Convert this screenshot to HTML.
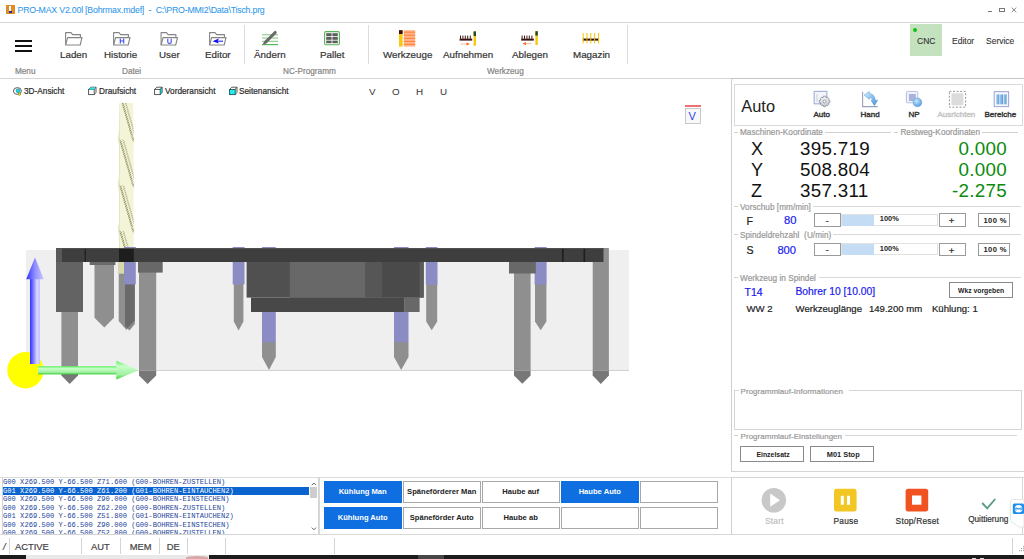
<!DOCTYPE html>
<html><head><meta charset="utf-8">
<style>
*{box-sizing:border-box;margin:0;padding:0}
html,body{width:1024px;height:559px;overflow:hidden;background:#fff}
body{position:relative;font-family:"Liberation Sans",sans-serif;color:#333}
.a{position:absolute}
.t{position:absolute;white-space:nowrap;line-height:1;-webkit-text-stroke-width:0.2px}
.hl{position:absolute;height:1px;background:#d9d9d9}
.vl{position:absolute;width:1px;background:#dcdcdc}
.rb{font-size:9.8px;color:#333}
.gl{font-size:8.2px;color:#858585}
.vt{font-size:8.25px;color:#2a2a2a;-webkit-text-stroke-width:0.2px}
.gt{font-size:8.2px;letter-spacing:0.05px;color:#989898}
.btn{position:absolute;border:1px solid #8c8c8c;background:#fff}
.cb{position:absolute;width:78px;height:21.4px;border:1px solid #a8a8a8;background:#fff;font-size:7.6px;font-weight:bold;-webkit-text-stroke-width:0;color:#222;text-align:center;line-height:19px;white-space:nowrap;overflow:hidden}
.cb.on{background:#0f6fe0;border-color:#0f6fe0;color:#fff}
.code{position:absolute;left:1px;font-family:"Liberation Mono",monospace;font-size:7.13px;color:#22449a;-webkit-text-stroke-width:0;white-space:pre;line-height:8.5px;height:8.5px}
</style></head><body>

<!-- TITLE BAR -->
<div class="a" style="left:6px;top:5px;width:9px;height:9px;background:#e08a28"></div>
<div class="a" style="left:9px;top:6px;width:2px;height:5px;background:#fff"></div>
<div class="a" style="left:9px;top:11px;width:3px;height:2px;background:#2030a0"></div>
<div class="t" style="left:17.5px;top:5.7px;font-size:8.8px;letter-spacing:-0.22px;-webkit-text-stroke-width:0.05px;color:#2c96ea">PRO-MAX V2.00l [Bohrmax.mdef]&nbsp; -&nbsp; C:\PRO-MMI2\Data\Tisch.prg</div>
<div class="a" style="left:988px;top:11px;width:4px;height:1px;background:#777"></div>
<div class="a" style="left:999px;top:8px;width:6px;height:4px;border:1px solid #777;border-top-width:1.5px"></div>
<svg class="a" style="left:1010px;top:6px" width="8" height="8"><path d="M1.7,1.6 L6.3,6.2 M6.3,1.6 L1.7,6.2" stroke="#777" stroke-width="0.9"/></svg>

<div class="hl" style="left:0;top:22px;width:1024px;background:#d4d4d4"></div>

<!-- RIBBON -->
<div class="a" style="left:15px;top:40px;width:17px;height:1.6px;background:#111"></div>
<div class="a" style="left:15px;top:45px;width:17px;height:1.6px;background:#111"></div>
<div class="a" style="left:15px;top:50px;width:17px;height:1.6px;background:#111"></div>
<div class="t gl" style="left:15px;top:68px">Menu</div>

<svg class="a" style="left:0;top:0" width="1024" height="100" viewBox="0 0 1024 100">
<g fill="none" stroke="#858585" stroke-width="1.1" stroke-linejoin="round">
<path d="M65.6,45 V32.6 H71 L72.6,34.6 H80.4 V37.4"/><path d="M65.6,45 L67.6,37.6 H82 L80.2,45 Z" fill="#fff"/>
<path d="M113.6,45 V32.6 H119 L120.6,34.6 H128.4 V37.4"/><path d="M113.6,45 L115.6,37.6 H130 L128.2,45 Z" fill="#fff"/>
<path d="M161.1,45 V32.6 H166.5 L168.1,34.6 H175.9 V37.4"/><path d="M161.1,45 L163.1,37.6 H177.5 L175.7,45 Z" fill="#fff"/>
<path d="M209.6,45 V32.6 H215 L216.6,34.6 H224.4 V37.4"/><path d="M209.6,45 L211.6,37.6 H226 L224.2,45 Z" fill="#fff"/>
</g>
<path d="M120.3,38.6 V43.4 M123.7,38.6 V43.4 M120.3,41 H123.7" stroke="#3a4ef0" stroke-width="1.1" fill="none"/>
<path d="M167.8,38.8 V42 Q167.8,43.4 169.5,43.4 Q171.2,43.4 171.2,42 V38.8" stroke="#3a4ef0" stroke-width="1.1" fill="none"/>
<path d="M212.5,41.2 L218.8,38.6 L217.6,41.2 L218.8,43.6 Z" fill="#1010f0"/><path d="M217,41.2 H223" stroke="#1010f0" stroke-width="1"/>
<g stroke="#7cc47c" stroke-width="1"><path d="M262,34.8 H278 M262,38 H278 M262,41.3 H278"/></g>
<path d="M262,44.6 H278" stroke="#4fb04f" stroke-width="1.1"/>
<path d="M262.5,44.8 L264.3,41.2 L274.1,31.4 Q275.2,30.3 276.3,31.4 Q277.4,32.5 276.3,33.6 L266.5,43.4 Z" fill="#6a6a6a"/>
<rect x="324.6" y="31.6" width="14.8" height="13.2" rx="1.2" fill="#fff" stroke="#55b455" stroke-width="1.1"/>
<g fill="#5c5c5c"><rect x="326.2" y="33.2" width="5.4" height="2.8"/><rect x="332.4" y="33.2" width="5.4" height="2.8"/><rect x="326.2" y="36.8" width="5.4" height="3"/><rect x="332.4" y="36.8" width="5.4" height="3"/><rect x="326.2" y="40.6" width="5.4" height="2.6"/><rect x="332.4" y="40.6" width="5.4" height="2.6"/></g>
<rect x="399" y="30.2" width="3.6" height="16.4" fill="#f8c810"/><rect x="399" y="30.2" width="3.6" height="3.8" fill="#3a1010"/>
<rect x="403.8" y="30.2" width="11.4" height="16.4" fill="#ffb48a"/>
<g stroke="#ff7a30" stroke-width="0.9"><path d="M403.8,32.2 H415.2 M403.8,35.2 H415.2 M403.8,38.4 H415.2 M403.8,41.4 H415.2 M403.8,44.4 H415.2"/></g>
<g fill="#3a1414"><rect x="459.6" y="38.6" width="12.6" height="2"/><rect x="460" y="35.6" width="1" height="3.2"/><rect x="462.4" y="35.6" width="1" height="3.2"/><rect x="464.8" y="35.6" width="1" height="3.2"/><rect x="467.2" y="35.6" width="1" height="3.2"/><rect x="469.8" y="35.6" width="1" height="3.2"/></g>
<path d="M460.6,44 H467" stroke="#ffb090" stroke-width="0.9"/><path d="M466.5,42.4 L470,44 L466.5,45.6 Z" fill="#ff7020"/>
<rect x="473.6" y="31.4" width="2.4" height="14.4" fill="#f8c810"/><rect x="473.6" y="31.4" width="2.4" height="4.6" fill="#204a20"/>
<g fill="#3a1414"><rect x="521.2" y="38.6" width="12.6" height="2"/><rect x="521.6" y="35.6" width="1" height="3.2"/><rect x="524" y="35.6" width="1" height="3.2"/><rect x="526.4" y="35.6" width="1" height="3.2"/><rect x="528.8" y="35.6" width="1" height="3.2"/><rect x="531.4" y="35.6" width="1" height="3.2"/></g>
<path d="M525,43.6 H531.6" stroke="#ffb090" stroke-width="0.9"/><path d="M526,42 L522.5,43.6 L526,45.2 Z" fill="#ff7020"/>
<rect x="535.4" y="31.2" width="2.4" height="13.8" fill="#f8c810"/><rect x="535.4" y="31.2" width="2.4" height="4.4" fill="#204a20"/>
<g fill="#f8c810"><rect x="582.6" y="33" width="1.1" height="10.4"/><rect x="586.4" y="33" width="1.1" height="10.4"/><rect x="590.2" y="33" width="1.1" height="10.4"/><rect x="594.1" y="33" width="1.1" height="10.4"/><rect x="598" y="33" width="1.1" height="10.4"/></g>
<rect x="583" y="38.6" width="15.6" height="2" fill="#2a0a0a"/>
<g fill="#f8c810"><rect x="582.6" y="38.4" width="1.1" height="2.4"/><rect x="586.4" y="38.4" width="1.1" height="2.4"/><rect x="590.2" y="38.4" width="1.1" height="2.4"/><rect x="594.1" y="38.4" width="1.1" height="2.4"/><rect x="598" y="38.4" width="1.1" height="2.4"/></g>
<ellipse cx="17.4" cy="91" rx="4" ry="3.4" fill="none" stroke="#606060" stroke-width="1"/>
<circle cx="18" cy="90.8" r="1.9" fill="#10d8e8" stroke="#008080" stroke-width="0.6"/>
<circle cx="19.4" cy="94" r="1.3" fill="#e0e020" stroke="#707000" stroke-width="0.5"/>
<g stroke="#4a4a4a" stroke-width="0.9" fill="none">
<rect x="88.6" y="89.4" width="5.6" height="5.2" fill="#fff"/><path d="M88.6,89.4 L90.8,87.2 H96 V92.4 L94.2,94.6 M94.2,89.4 L96,87.2"/>
</g>
<path d="M88.8,89.4 L90.8,87.4 H95.6 L93.8,89.4 Z" fill="#20f0f0"/>
<g stroke="#4a4a4a" stroke-width="0.9" fill="none">
<rect x="154.6" y="89.4" width="5.6" height="5.2" fill="#fff"/><path d="M154.6,89.4 L156.8,87.2 H162 V92.4 L160.2,94.6 M160.2,89.4 L162,87.2"/>
</g>
<path d="M160.4,89.4 L162,87.4 V92.4 L160.4,94.4 Z" fill="#20e8e8" stroke="#106060" stroke-width="0.5"/>
<g stroke="#4a4a4a" stroke-width="0.9" fill="none">
<path d="M229.6,89.4 L231.8,87.2 H237 V92.4 L235.2,94.6 M235.2,89.4 L237,87.2"/>
</g>
<rect x="229.6" y="89.4" width="5.6" height="5.2" fill="#20f0f0" stroke="#1a5050" stroke-width="0.9"/>
</svg>


<div class="t rb" style="left:60px;top:49.7px">Laden</div>
<div class="t rb" style="left:104px;top:49.7px">Historie</div>
<div class="t rb" style="left:159px;top:49.7px">User</div>
<div class="t rb" style="left:205px;top:49.7px">Editor</div>
<div class="t gl" style="left:122px;top:68px">Datei</div>
<div class="vl" style="left:244px;top:25px;height:39px"></div>
<div class="t rb" style="left:254px;top:49.7px">&Auml;ndern</div>
<div class="t rb" style="left:320px;top:49.7px">Pallet</div>
<div class="t gl" style="left:283px;top:68px">NC-Programm</div>
<div class="vl" style="left:368px;top:25px;height:39px"></div>
<div class="t rb" style="left:383px;top:49.7px">Werkzeuge</div>
<div class="t rb" style="left:443px;top:49.7px">Aufnehmen</div>
<div class="t rb" style="left:512px;top:49.7px">Ablegen</div>
<div class="t rb" style="left:573px;top:49.7px">Magazin</div>
<div class="t gl" style="left:487px;top:68px">Werkzeug</div>
<div class="vl" style="left:627px;top:25px;height:39px"></div>

<div class="a" style="left:910px;top:24px;width:32px;height:32px;background:#c4e2be"></div>
<div class="a" style="left:913px;top:28px;width:4px;height:4px;border-radius:50%;background:#10c010"></div>
<div class="t" style="left:917px;top:36.5px;font-size:8.5px;-webkit-text-stroke-width:0.1px;color:#333">CNC</div>
<div class="t" style="left:952px;top:36.5px;font-size:8.5px;-webkit-text-stroke-width:0.1px;color:#333">Editor</div>
<div class="t" style="left:986px;top:36.5px;font-size:8.5px;-webkit-text-stroke-width:0.1px;color:#333">Service</div>

<div class="hl" style="left:0;top:78px;width:1024px;background:#d4d4d4"></div>

<!-- VIEW TOOLBAR -->
<div id="view-toolbar"></div>
<div class="t vt" style="left:24px;top:88.3px">3D-Ansicht</div>
<div class="t vt" style="left:99px;top:88.3px">Draufsicht</div>
<div class="t vt" style="left:165px;top:88.3px">Vorderansicht</div>
<div class="t vt" style="left:239px;top:88.3px">Seitenansicht</div>
<div class="t" style="left:369px;top:87.2px;font-size:9.8px;-webkit-text-stroke-width:0.05px;color:#3a3a3a">V</div>
<div class="t" style="left:392px;top:87.2px;font-size:9.8px;-webkit-text-stroke-width:0.05px;color:#3a3a3a">O</div>
<div class="t" style="left:416px;top:87.2px;font-size:9.8px;-webkit-text-stroke-width:0.05px;color:#3a3a3a">H</div>
<div class="t" style="left:440px;top:87.2px;font-size:9.8px;-webkit-text-stroke-width:0.05px;color:#3a3a3a">U</div>

<!-- SCENE -->
<svg class="a" style="left:0;top:100px" width="731" height="300" viewBox="0 100 731 300">
<defs>
<pattern id="drl" width="2.2" height="2.2" patternUnits="userSpaceOnUse" patternTransform="rotate(-30)">
<rect width="2.2" height="2.2" fill="#e8e8c0"/><rect width="0.9" height="2.2" fill="#9a9a68"/>
</pattern>
<pattern id="drl2" width="2.5" height="2.5" patternUnits="userSpaceOnUse" patternTransform="rotate(-30)">
<rect width="2.5" height="2.5" fill="#eeeecc"/><rect width="0.6" height="2.5" fill="#b0b080"/>
</pattern>
<linearGradient id="bluesh" x1="0" x2="1" y1="0" y2="0"><stop offset="0" stop-color="#3030ff"/><stop offset="0.35" stop-color="#8080ff"/><stop offset="0.7" stop-color="#d8d8ff"/><stop offset="1" stop-color="#c0c0ff"/></linearGradient>
<linearGradient id="bluehd" x1="0" x2="1" y1="0" y2="0"><stop offset="0" stop-color="#3030ff"/><stop offset="0.5" stop-color="#9090ff"/><stop offset="1" stop-color="#c8c8ff"/></linearGradient>
<linearGradient id="greensh" x1="0" x2="0" y1="0" y2="1"><stop offset="0" stop-color="#60f060"/><stop offset="0.3" stop-color="#c8ffc8"/><stop offset="0.75" stop-color="#a0f0a0"/><stop offset="1" stop-color="#30d030"/></linearGradient>
</defs>
<!-- drill above -->
<clipPath id="drc"><path d="M119.6,103 H133 L133.6,130 L134.4,138 L133.6,146 L133.6,176 L134.4,184 L133.6,192 V222 L134.4,229 L133.6,236 L133.6,248 H119 V236 L118.3,229 L119,222 V192 L118.3,184 L119,176 V146 L118.3,138 L119,130 Z"/></clipPath>
<g clip-path="url(#drc)">
<rect x="117" y="103" width="19" height="160" fill="#f4f4d8"/>
<path d="M121.5,102.7 l2.6,1.8 M122.1,104.7 l2.6,1.8 M122.6,106.8 l2.6,1.8 M123.2,108.9 l2.6,1.8 M123.8,110.9 l2.6,1.8 M124.4,113.0 l2.6,1.8 M125.0,115.1 l2.6,1.8 M125.6,117.2 l2.6,1.8 M126.2,119.2 l2.6,1.8 M126.8,121.3 l2.6,1.8 M127.4,123.4 l2.6,1.8 M128.0,125.4 l2.6,1.8 M128.6,127.5 l2.6,1.8 M129.1,129.6 l2.6,1.8 M129.7,131.6 l2.6,1.8 M130.3,133.7 l2.6,1.8 M131.5,137.8 l2.6,1.8 M119.1,139.9 l2.6,1.8 M119.7,142.0 l2.6,1.8 M120.3,144.0 l2.6,1.8 M120.9,146.1 l2.6,1.8 M121.5,148.2 l2.6,1.8 M122.1,150.2 l2.6,1.8 M122.6,152.3 l2.6,1.8 M123.2,154.4 l2.6,1.8 M123.8,156.4 l2.6,1.8 M124.4,158.5 l2.6,1.8 M125.0,160.6 l2.6,1.8 M125.6,162.7 l2.6,1.8 M126.2,164.7 l2.6,1.8 M126.8,166.8 l2.6,1.8 M127.4,168.9 l2.6,1.8 M128.0,170.9 l2.6,1.8 M128.6,173.0 l2.6,1.8 M129.1,175.1 l2.6,1.8 M129.7,177.1 l2.6,1.8 M130.3,179.2 l2.6,1.8 M131.5,183.3 l2.6,1.8 M119.1,185.4 l2.6,1.8 M119.7,187.5 l2.6,1.8 M120.3,189.5 l2.6,1.8 M120.9,191.6 l2.6,1.8 M121.5,193.7 l2.6,1.8 M122.1,195.7 l2.6,1.8 M122.6,197.8 l2.6,1.8 M123.2,199.9 l2.6,1.8 M123.8,201.9 l2.6,1.8 M124.4,204.0 l2.6,1.8 M125.0,206.1 l2.6,1.8 M125.6,208.2 l2.6,1.8 M126.2,210.2 l2.6,1.8 M126.8,212.3 l2.6,1.8 M127.4,214.4 l2.6,1.8 M128.0,216.4 l2.6,1.8 M128.6,218.5 l2.6,1.8 M129.1,220.6 l2.6,1.8 M129.7,222.6 l2.6,1.8 M130.3,224.7 l2.6,1.8 M131.5,228.8 l2.6,1.8 M119.1,230.9 l2.6,1.8 M119.7,233.0 l2.6,1.8 M120.3,235.0 l2.6,1.8 M120.9,237.1 l2.6,1.8 M121.5,239.2 l2.6,1.8 M122.1,241.2 l2.6,1.8 M122.6,243.3 l2.6,1.8 M123.2,245.4 l2.6,1.8" stroke="#85855a" stroke-width="0.9" fill="none"/>
<path d="M124.8,102.8 l2.2,1.5 M125.4,104.8 l2.2,1.5 M125.9,106.9 l2.2,1.5 M126.5,109.0 l2.2,1.5 M127.1,111.0 l2.2,1.5 M127.7,113.1 l2.2,1.5 M128.3,115.2 l2.2,1.5 M128.9,117.2 l2.2,1.5 M129.5,119.3 l2.2,1.5 M130.1,121.4 l2.2,1.5 M130.7,123.5 l2.2,1.5 M131.3,125.5 l2.2,1.5 M131.9,127.6 l2.2,1.5 M132.4,129.7 l2.2,1.5 M133.0,131.7 l2.2,1.5 M130.9,135.8 l2.6,1.8 M132.1,139.9 l2.6,1.8 M122.4,140.0 l2.2,1.5 M123.0,142.1 l2.2,1.5 M123.6,144.1 l2.2,1.5 M124.2,146.2 l2.2,1.5 M124.8,148.3 l2.2,1.5 M125.4,150.3 l2.2,1.5 M125.9,152.4 l2.2,1.5 M126.5,154.5 l2.2,1.5 M127.1,156.5 l2.2,1.5 M127.7,158.6 l2.2,1.5 M128.3,160.7 l2.2,1.5 M128.9,162.8 l2.2,1.5 M129.5,164.8 l2.2,1.5 M130.1,166.9 l2.2,1.5 M130.7,169.0 l2.2,1.5 M131.3,171.0 l2.2,1.5 M131.9,173.1 l2.2,1.5 M132.4,175.2 l2.2,1.5 M133.0,177.2 l2.2,1.5 M130.9,181.3 l2.6,1.8 M132.1,185.4 l2.6,1.8 M122.4,185.5 l2.2,1.5 M123.0,187.6 l2.2,1.5 M123.6,189.6 l2.2,1.5 M124.2,191.7 l2.2,1.5 M124.8,193.8 l2.2,1.5 M125.4,195.8 l2.2,1.5 M125.9,197.9 l2.2,1.5 M126.5,200.0 l2.2,1.5 M127.1,202.0 l2.2,1.5 M127.7,204.1 l2.2,1.5 M128.3,206.2 l2.2,1.5 M128.9,208.2 l2.2,1.5 M129.5,210.3 l2.2,1.5 M130.1,212.4 l2.2,1.5 M130.7,214.5 l2.2,1.5 M131.3,216.5 l2.2,1.5 M131.9,218.6 l2.2,1.5 M132.4,220.7 l2.2,1.5 M133.0,222.7 l2.2,1.5 M130.9,226.8 l2.6,1.8 M132.1,230.9 l2.6,1.8 M122.4,231.0 l2.2,1.5 M123.0,233.1 l2.2,1.5 M123.6,235.1 l2.2,1.5 M124.2,237.2 l2.2,1.5 M124.8,239.3 l2.2,1.5 M125.4,241.3 l2.2,1.5 M125.9,243.4 l2.2,1.5 M126.5,245.5 l2.2,1.5" stroke="#a0a070" stroke-width="0.75" fill="none"/>
<rect x="118" y="103" width="1.6" height="160" fill="#dcdcb0"/>
</g>
<!-- background plane -->
<rect x="26" y="250" width="603" height="120.5" fill="#efefef"/>
<rect x="26" y="370" width="603" height="1" fill="#d2d2d2"/>
<!-- rods below plane (true color tips) -->
<g fill="#777">
<path d="M61.4,370.5 H78 V375.6 L69.7,384 L61.4,375.6 Z"/>
<path d="M139,370.5 H156.2 V375.6 L147.6,384 L139,375.6 Z"/>
<path d="M514,370.5 H530.6 V375.6 L522.3,383.8 L514,375.6 Z"/>
<path d="M592.7,370.5 H608.9 V375.6 L600.8,384 L592.7,375.6 Z"/>
</g>
<g fill="#8f8f8f">
<!-- rod1 -->
<rect x="61.4" y="312" width="16.6" height="58.5"/>
<!-- rod2 -->
<path d="M94.5,262 H114 V317.7 L104.3,327.5 L94.5,317.7 Z"/>
<!-- rod3 grey -->
<path d="M118.7,262 H134.8 V321 L126.5,330 L118.7,321 Z"/>
<!-- rod4 -->
<rect x="139" y="272" width="17.2" height="98.5"/>
<!-- rod A -->
<path d="M233.8,284 H243.4 V321.4 L238.6,330.4 L233.8,321.4 Z"/>
<!-- rod C -->
<path d="M262,342 H275.8 V357 L269,370 L262,357 Z"/>
<path d="M394,342 H408.5 V357 L401.2,370 L394,357 Z"/>
<!-- rod D -->
<path d="M426.2,284 H437.2 V321.4 L431.7,330.2 L426.2,321.4 Z"/>
<!-- rod E -->
<rect x="514" y="273" width="16.6" height="97.5"/>
<!-- rod F -->
<path d="M535,284 H546.4 V321.4 L540.7,330.2 L535,321.4 Z"/>
<!-- rod G -->
<rect x="592.7" y="248" width="16.2" height="122.5"/>
</g>
<path d="M125,262 H134.8 V321 L127.5,328.5 L125,326 Z" fill="#6a6a6a"/>
<path d="M127.5,328.5 L134.8,321 V324 L129.5,330.5 Z" fill="#8a8a8a"/>
<rect x="118.7" y="262" width="6.4" height="11.7" fill="#d8d8a8"/>
<!-- blue rods -->
<g fill="#8c8cc4">
<rect x="124" y="247" width="11.8" height="37.4"/>
<rect x="232.7" y="247" width="11.8" height="37.4"/>
<rect x="425.8" y="247" width="11.7" height="37.7"/>
<rect x="534.6" y="247" width="12" height="37.5"/>
<rect x="262" y="312" width="13.8" height="30.2"/>
<rect x="394" y="312" width="14.5" height="30.2"/>
<rect x="262" y="247" width="13.8" height="2"/>
<rect x="394" y="247" width="14.5" height="2"/>
</g>
<!-- top bar -->
<rect x="56" y="248" width="547.5" height="14" fill="#3e3e3e"/>
<rect x="56" y="248" width="6" height="14" fill="#585858"/>
<rect x="84.6" y="248" width="1.4" height="14" fill="#222"/>
<rect x="119" y="248" width="14.8" height="14" fill="#1e1e1e"/>
<rect x="562" y="248" width="1.6" height="14" fill="#1e1e1e"/>
<rect x="583.5" y="248" width="1.6" height="14" fill="#1e1e1e"/>
<rect x="56" y="248" width="547.5" height="0.8" fill="#555"/>
<!-- blocks -->
<rect x="56" y="262" width="27" height="50" fill="#636363"/>
<rect x="89.7" y="262" width="25.7" height="3" fill="#6a6a6a"/>
<rect x="138" y="262" width="24.7" height="10.6" fill="#686868"/>
<rect x="509" y="262" width="26.8" height="11.5" fill="#686868"/>
<rect x="246.6" y="262" width="177.1" height="35.6" fill="#505050"/>
<rect x="289.8" y="262" width="75.2" height="35.6" fill="#686868"/>
<rect x="365" y="262" width="17" height="35.6" fill="#565656"/>
<rect x="382" y="262" width="37.6" height="35.6" fill="#4a4a4a"/>
<rect x="419.6" y="262" width="4.1" height="35.6" fill="#5c5c5c"/>
<rect x="251" y="297.6" width="153.7" height="14.4" fill="#484848"/>
<rect x="404.7" y="297.6" width="14.9" height="14.4" fill="#686868"/>
<!-- axes -->
<circle cx="25.5" cy="370.2" r="18.2" fill="#ffff00"/>
<rect x="30" y="278" width="10" height="86" fill="url(#bluesh)"/>
<path d="M26.2,279.2 L35,257.5 L43.8,279.2 Z" fill="url(#bluehd)"/>
<rect x="38" y="366.2" width="79" height="8.2" fill="url(#greensh)"/>
<path d="M116.3,360.8 L138.7,370.2 L116.3,379.4 Z" fill="url(#greensh)"/>
</svg>


<!-- V box -->
<div class="a" style="left:685px;top:105px;width:16px;height:2px;background:#f07070"></div>
<div class="a" style="left:685px;top:108px;width:16px;height:16px;border:1px solid #c8c8c8;background:#f8f8f8"></div>
<div class="t" style="left:688.6px;top:110.6px;font-size:11px;-webkit-text-stroke-width:0;color:#2a3cf0">V</div>

<!-- RIGHT PANEL -->
<div class="a" style="left:731px;top:78px;width:293px;height:1.2px;background:#c4c4c4"></div>
<div class="a" style="left:731px;top:78px;width:1px;height:394px;background:#cfcfcf"></div>
<div class="a" style="left:733.5px;top:84px;width:289px;height:41.5px;border:1px solid #dadada"></div>
<div class="t" style="left:741.3px;top:97.5px;font-size:16.4px;-webkit-text-stroke-width:0;color:#222">Auto</div>
<svg class="a" style="left:800px;top:84px" width="224" height="30" viewBox="800 84 224 30">
<defs>
<linearGradient id="gearg" x1="0" y1="0" x2="0" y2="1"><stop offset="0" stop-color="#f4f6f8"/><stop offset="1" stop-color="#c4c8d0"/></linearGradient>
<radialGradient id="npb" cx="0.4" cy="0.35" r="0.7"><stop offset="0" stop-color="#c8e8ff"/><stop offset="1" stop-color="#4c98dc"/></radialGradient>
<linearGradient id="hand" x1="0" y1="0" x2="1" y2="1"><stop offset="0" stop-color="#d8f2ff"/><stop offset="1" stop-color="#3c90d8"/></linearGradient>
<linearGradient id="ber" x1="0" y1="0" x2="1" y2="0"><stop offset="0" stop-color="#a8d0f0"/><stop offset="1" stop-color="#5c98d8"/></linearGradient>
</defs>
<rect x="814.2" y="91.4" width="12.6" height="12.4" fill="#f4f6fc" stroke="#a8b4d8" stroke-width="1.2"/>
<path d="M817,94.5 V102" stroke="#8890a0" stroke-width="0.8" stroke-dasharray="1,1"/>
<g transform="translate(824.6,101.4)">
<path d="M-1.2,-5.2 H1.2 L1.6,-3.6 L3,-4.2 L4.2,-3 L3.6,-1.6 L5.2,-1.2 V1.2 L3.6,1.6 L4.2,3 L3,4.2 L1.6,3.6 L1.2,5.2 H-1.2 L-1.6,3.6 L-3,4.2 L-4.2,3 L-3.6,1.6 L-5.2,1.2 V-1.2 L-3.6,-1.6 L-4.2,-3 L-3,-4.2 L-1.6,-3.6 Z" fill="url(#gearg)" stroke="#7a8090" stroke-width="0.7"/>
<circle r="1.5" fill="#eef0f4" stroke="#7a8088" stroke-width="0.6"/>
</g>
<path d="M862.6,91.8 V106.6 H877.6" fill="none" stroke="#9aa0b8" stroke-width="1.1"/>
<path d="M864,95 L869.4,91.6 V93.6 Q874.4,94 875.4,100.2 H877.6 L874.4,105.8 L871,100.2 H872.6 Q872.2,97.4 869.4,97.4 V99.4 Z" fill="url(#hand)" stroke="#5a9ad0" stroke-width="0.5"/>
<rect x="906.4" y="91.4" width="11.4" height="11.4" rx="1" fill="#eef0fa" stroke="#b8c0e0" stroke-width="1"/>
<rect x="909" y="94" width="6.8" height="7" fill="#a8b2dc"/>
<circle cx="917.4" cy="102.4" r="4.4" fill="url(#npb)" stroke="#5a98d0" stroke-width="0.4"/>
<rect x="949.4" y="91.4" width="16.2" height="15.8" fill="none" stroke="#8a8a8a" stroke-width="0.9" stroke-dasharray="2,1.6"/>
<rect x="951.4" y="93.2" width="12" height="12" rx="1" fill="#dcdcdc"/>
<rect x="994.2" y="91.6" width="14.4" height="15" fill="#f4f6fc" stroke="#a4acd4" stroke-width="1.1"/>
<rect x="995.8" y="94" width="11.2" height="10.8" fill="#fff"/>
<rect x="996.2" y="94.4" width="3.2" height="10" fill="url(#ber)"/>
<rect x="999.8" y="94.4" width="3.2" height="10" fill="url(#ber)"/>
<rect x="1003.4" y="94.4" width="3.2" height="10" fill="url(#ber)"/>
</svg>
<div class="t" style="left:813.5px;top:110.9px;font-size:8px;-webkit-text-stroke-width:0.4px;color:#333">Auto</div>
<div class="t" style="left:860.5px;top:110.9px;font-size:8px;-webkit-text-stroke-width:0.4px;color:#333">Hand</div>
<div class="t" style="left:908.5px;top:110.9px;font-size:8px;-webkit-text-stroke-width:0.4px;color:#333">NP</div>
<div class="t" style="left:937.5px;top:110.9px;font-size:8px;-webkit-text-stroke-width:0.4px;color:#c4c4c4">Ausrichten</div>
<div class="t" style="left:984.5px;top:110.9px;font-size:8px;-webkit-text-stroke-width:0.4px;color:#333">Bereiche</div>

<!-- group labels -->
<div class="hl" style="left:734px;top:132px;width:4px;background:#d0d0d0"></div>
<div class="t gt" style="left:740px;top:129px">Maschinen-Koordinate</div>
<div class="hl" style="left:824.5px;top:132px;width:66px;background:#d0d0d0"></div>
<div class="hl" style="left:894px;top:132px;width:4px;background:#d0d0d0"></div>
<div class="t gt" style="left:900.4px;top:129px">Restweg-Koordinaten</div>
<div class="hl" style="left:982.3px;top:132px;width:35.5px;background:#d0d0d0"></div>

<div class="t" style="left:751px;top:140.3px;font-size:18px;-webkit-text-stroke-width:0;color:#111">X</div>
<div class="t" style="left:751px;top:160.8px;font-size:18px;-webkit-text-stroke-width:0;color:#111">Y</div>
<div class="t" style="left:751px;top:181.6px;font-size:18px;-webkit-text-stroke-width:0;color:#111">Z</div>
<div class="t" style="left:800px;top:140.2px;font-size:18.8px;-webkit-text-stroke-width:0;letter-spacing:0.3px;color:#111">395.719</div>
<div class="t" style="left:800px;top:160.7px;font-size:18.8px;-webkit-text-stroke-width:0;letter-spacing:0.3px;color:#111">508.804</div>
<div class="t" style="left:800px;top:181.5px;font-size:18.8px;-webkit-text-stroke-width:0;letter-spacing:0.3px;color:#111">357.311</div>
<div class="t" style="right:17px;top:140.2px;font-size:18.8px;-webkit-text-stroke-width:0;letter-spacing:0.3px;color:#0a8a0a">0.000</div>
<div class="t" style="right:17px;top:160.7px;font-size:18.8px;-webkit-text-stroke-width:0;letter-spacing:0.3px;color:#0a8a0a">0.000</div>
<div class="t" style="right:17px;top:181.5px;font-size:18.8px;-webkit-text-stroke-width:0;letter-spacing:0.3px;color:#0a8a0a">-2.275</div>

<div class="hl" style="left:734px;top:206px;width:4px;background:#d0d0d0"></div>
<div class="t gt" style="left:740px;top:203.5px">Vorschub [mm/min]</div>
<div class="hl" style="left:813px;top:206px;width:208px;background:#d8d8d8"></div>
<div class="t" style="left:746.5px;top:215.8px;font-size:10.6px;color:#222">F</div>
<div class="t" style="left:784px;top:215.2px;font-size:11.2px;color:#2020ee">80</div>
<div class="btn" style="left:814px;top:213px;width:27px;height:14px;border-color:#9a9a9a"></div>
<div class="t" style="left:825.8px;top:216.5px;font-size:9px;color:#333">-</div>
<div class="a" style="left:841px;top:213.8px;width:97px;height:12.4px;background:#fff;border:1px solid #e2e2e2"></div>
<div class="a" style="left:842px;top:214.6px;width:32px;height:11px;background:#c4dcf4"></div>
<div class="t" style="left:879.7px;top:215.3px;font-size:7.4px;font-weight:bold;-webkit-text-stroke-width:0;letter-spacing:0.1px;color:#222">100%</div>
<div class="btn" style="left:938.7px;top:213px;width:27px;height:14px;border-color:#9a9a9a"></div>
<div class="t" style="left:948.8px;top:216.2px;font-size:9.5px;color:#222">+</div>
<div class="btn" style="left:978.3px;top:213px;width:32px;height:14px;border-color:#9a9a9a"></div>
<div class="t" style="left:983.5px;top:216.7px;font-size:7.6px;font-weight:bold;-webkit-text-stroke-width:0;letter-spacing:0.35px;color:#222">100 %</div>

<div class="hl" style="left:734px;top:234px;width:4px;background:#d0d0d0"></div>
<div class="t gt" style="left:740px;top:231.6px">Spindeldrehzahl&nbsp; (U/min)</div>
<div class="hl" style="left:833px;top:234px;width:188px;background:#d8d8d8"></div>
<div class="t" style="left:746.5px;top:245px;font-size:10.6px;color:#222">S</div>
<div class="t" style="left:777.4px;top:244.5px;font-size:11.2px;color:#2020ee">800</div>
<div class="btn" style="left:814px;top:242.7px;width:27px;height:13px;border-color:#9a9a9a"></div>
<div class="t" style="left:825.8px;top:245.8px;font-size:9px;color:#333">-</div>
<div class="a" style="left:841px;top:243.3px;width:97px;height:12px;background:#fff;border:1px solid #e2e2e2"></div>
<div class="a" style="left:842px;top:244.1px;width:32px;height:10.6px;background:#c4dcf4"></div>
<div class="t" style="left:879.7px;top:244.9px;font-size:7.4px;font-weight:bold;-webkit-text-stroke-width:0;letter-spacing:0.1px;color:#222">100%</div>
<div class="btn" style="left:938.7px;top:242.7px;width:27px;height:13px;border-color:#9a9a9a"></div>
<div class="t" style="left:948.8px;top:245.6px;font-size:9.5px;color:#222">+</div>
<div class="btn" style="left:978.3px;top:242.7px;width:32px;height:13px;border-color:#9a9a9a"></div>
<div class="t" style="left:983.5px;top:246.4px;font-size:7.6px;font-weight:bold;-webkit-text-stroke-width:0;letter-spacing:0.35px;color:#222">100 %</div>

<div class="hl" style="left:734px;top:277px;width:4px;background:#d0d0d0"></div>
<div class="t gt" style="left:740px;top:274.6px">Werkzeug in Spindel</div>
<div class="hl" style="left:819px;top:277px;width:202px;background:#d8d8d8"></div>
<div class="t" style="left:744.5px;top:287px;font-size:10.5px;color:#2020ee">T14</div>
<div class="t" style="left:795.5px;top:287.2px;font-size:10.3px;color:#2020ee">Bohrer 10 [10.00]</div>
<div class="btn" style="left:949px;top:282.3px;width:64px;height:15.7px;border-color:#8a8a8a"></div>
<div class="t" style="left:958px;top:288.2px;font-size:6.8px;font-weight:bold;-webkit-text-stroke-width:0;color:#222">Wkz vorgeben</div>
<div class="t" style="left:746.4px;top:303.6px;font-size:9.6px;color:#222">WW 2</div>
<div class="t" style="left:795.5px;top:303.6px;font-size:9.6px;color:#222">Werkzeugl&auml;nge</div>
<div class="t" style="left:868.9px;top:303.6px;font-size:9.6px;color:#222">149.200 mm</div>
<div class="t" style="left:931.9px;top:303.6px;font-size:9.6px;color:#222">K&uuml;hlung: 1</div>

<div class="a" style="left:734.3px;top:390px;width:288px;height:40px;border:1px solid #d4d4d4"></div>
<div class="a" style="left:739px;top:386px;width:110px;height:9px;background:#fff"></div>
<div class="t gt" style="left:740.6px;top:387.8px;font-size:7.95px">Programmlauf-Informationen</div>
<div class="hl" style="left:734px;top:435px;width:4px;background:#d0d0d0"></div>
<div class="t gt" style="left:740.6px;top:433px;font-size:7.95px">Programmlauf-Einstellungen</div>
<div class="hl" style="left:845px;top:435px;width:172px;background:#d8d8d8"></div>
<div class="btn" style="left:740px;top:446px;width:64px;height:16.4px;border-color:#8a8a8a"></div>
<div class="t" style="left:756.4px;top:452px;font-size:6.9px;font-weight:bold;-webkit-text-stroke-width:0;color:#222">Einzelsatz</div>
<div class="btn" style="left:810.4px;top:446px;width:64px;height:16.4px;border-color:#8a8a8a"></div>
<div class="t" style="left:826.8px;top:451.3px;font-size:7.4px;font-weight:bold;-webkit-text-stroke-width:0;color:#222">M01 Stop</div>
<div class="hl" style="left:731px;top:471px;width:293px;background:#d4d4d4"></div>


<!-- BOTTOM -->
<div class="hl" style="left:0;top:477px;width:731px;background:#dcdcdc"></div>
<div class="hl" style="left:731px;top:477px;width:293px;background:#d4d4d4"></div>
<div class="hl" style="left:0;top:534px;width:1024px;background:#d8d8d8"></div>
<!-- list -->
<div class="a" style="left:1.5px;top:477px;width:317px;height:57.5px;border:1px solid #d4d4d4;border-top:none;overflow:hidden">
<div class="a" style="left:0.5px;top:9.7px;width:306px;height:8px;background:#0a64d0"></div>
</div>
<div class="a" style="left:2px;top:478px;width:307px;height:56px;overflow:hidden">
<div class="code" style="top:0.0px">G00 X269.500 Y-66.500 Z71.600 (G00-BOHREN-ZUSTELLEN)</div>
<div class="code" style="top:8.5px;color:#fff">G01 X269.500 Y-66.500 Z61.200 (G01-BOHREN-EINTAUCHEN2)</div>
<div class="code" style="top:17.0px">G00 X269.500 Y-66.500 Z90.000 (G00-BOHREN-EINSTECHEN)</div>
<div class="code" style="top:25.5px">G00 X269.500 Y-66.500 Z62.200 (G00-BOHREN-ZUSTELLEN)</div>
<div class="code" style="top:34.0px">G01 X269.500 Y-66.500 Z51.800 (G01-BOHREN-EINTAUCHEN2)</div>
<div class="code" style="top:42.5px">G00 X269.500 Y-66.500 Z90.000 (G00-BOHREN-EINSTECHEN)</div>
<div class="code" style="top:51.0px">G00 X269.500 Y-66.500 Z52.800 (G00-BOHREN-ZUSTELLEN)</div>
</div>
<div class="a" style="left:309px;top:478px;width:9px;height:56px;background:#fff"></div>
<div class="a" style="left:309.5px;top:487.2px;width:7.5px;height:10.5px;background:#cdcdcd"></div>
<svg class="a" style="left:309px;top:478px" width="10" height="56" viewBox="0 0 10 56"><path d="M2.8,7.2 L4.9,5 L7,7.2" fill="none" stroke="#555" stroke-width="0.9"/><path d="M2.8,49.6 L4.9,51.8 L7,49.6" fill="none" stroke="#555" stroke-width="0.9"/></svg>
<div class="a" style="left:318.5px;top:477px;width:1px;height:57px;background:#d8d8d8"></div>
<!-- grid buttons -->
<div class="cb on" style="left:323.7px;top:481.4px">K&uuml;hlung Man</div>
<div class="cb" style="left:402.7px;top:481.4px">Sp&auml;nef&ouml;rderer Man</div>
<div class="cb" style="left:481.7px;top:481.4px">Haube auf</div>
<div class="cb on" style="left:560.8px;top:481.4px">Haube Auto</div>
<div class="cb" style="left:639.9px;top:481.4px"></div>
<div class="cb on" style="left:323.7px;top:507.4px">K&uuml;hlung Auto</div>
<div class="cb" style="left:402.7px;top:507.4px">Sp&auml;nef&ouml;rder Auto</div>
<div class="cb" style="left:481.7px;top:507.4px">Haube ab</div>
<div class="cb" style="left:560.8px;top:507.4px"></div>
<div class="cb" style="left:639.9px;top:507.4px"></div>
<!-- control panel -->
<div class="a" style="left:731px;top:477px;width:1px;height:57.5px;background:#d0d0d0"></div>
<div class="a" style="left:1022px;top:477px;width:1px;height:57.5px;background:#d8d8d8"></div>
<svg class="a" style="left:731px;top:477px" width="293" height="58" viewBox="731 477 293 58">
<circle cx="773.8" cy="500.2" r="12.3" fill="#c8c8c8"/>
<path d="M770.2,493.6 L780,500.2 L770.2,506.8 Z" fill="#fff"/>
<rect x="834" y="488.8" width="22.6" height="22.6" rx="2.6" fill="#f2c623"/>
<rect x="840.8" y="495.8" width="3" height="9" fill="#fff"/><rect x="847" y="495.8" width="3" height="9" fill="#fff"/>
<rect x="905.6" y="488.8" width="22.6" height="22.6" rx="2.6" fill="#f05222"/>
<rect x="912" y="495.5" width="9.4" height="9.2" fill="#fff"/>
<path d="M982.2,503 L987.2,508.4 L995.2,499" fill="none" stroke="#5c9c84" stroke-width="1.9"/>
<path d="M1024,499.5 H1013 Q1010.5,499.5 1010.5,502 V521 L1019,527 H1024 Z" fill="#fff" stroke="#e0e0e0" stroke-width="0.8"/>
<rect x="1012.8" y="503.5" width="11.2" height="10.6" rx="1.5" fill="#1d8ef0"/>
<circle cx="1018.6" cy="508.8" r="3.8" fill="#fff"/>
<path d="M1015.6,508.8 H1021.6" stroke="#1d8ef0" stroke-width="1.2"/>
<path d="M1016.4,507.2 L1014.8,508.8 L1016.4,510.4 M1020.8,507.2 L1022.4,508.8 L1020.8,510.4" fill="none" stroke="#1d8ef0" stroke-width="0.8"/>
</svg>
<div class="t" style="left:765px;top:516.6px;font-size:8.4px;letter-spacing:0.2px;color:#c0c0c0">Start</div>
<div class="t" style="left:833.5px;top:516.6px;font-size:8.4px;letter-spacing:0.2px;color:#333">Pause</div>
<div class="t" style="left:895.6px;top:516.6px;font-size:8.4px;letter-spacing:0.2px;color:#333">Stop/Reset</div>
<div class="t" style="left:968.2px;top:515.8px;font-size:8.2px;color:#333">Quittierung</div>
<!-- status bar -->
<div class="t" style="left:3px;top:541.6px;font-size:9.4px;font-style:italic;color:#444">/</div>
<div class="t" style="left:15px;top:541.6px;font-size:9.4px;color:#444">ACTIVE</div>
<div class="t" style="left:91px;top:541.6px;font-size:9.4px;color:#444">AUT</div>
<div class="t" style="left:129.7px;top:541.6px;font-size:9.4px;color:#444">MEM</div>
<div class="t" style="left:166.8px;top:541.6px;font-size:9.4px;color:#444">DE</div>
<div class="vl" style="left:9px;top:538px;height:16px;background:#d4d4d4"></div>
<div class="vl" style="left:80.5px;top:538px;height:16px;background:#d4d4d4"></div>
<div class="vl" style="left:119.5px;top:538px;height:16px;background:#d4d4d4"></div>
<div class="vl" style="left:158.5px;top:538px;height:16px;background:#d4d4d4"></div>
<div class="vl" style="left:186.5px;top:538px;height:16px;background:#d4d4d4"></div>
<div class="vl" style="left:225px;top:538px;height:16px;background:#d4d4d4"></div>
<div class="vl" style="left:333.5px;top:538px;height:16px;background:#d4d4d4"></div>
<div class="vl" style="left:1012px;top:538px;height:16px;background:#d4d4d4"></div>
<svg class="a" style="left:1016px;top:545px" width="10" height="10"><g fill="#b0b0b0"><rect x="7" y="1" width="1.2" height="1.2"/><rect x="5" y="3" width="1.2" height="1.2"/><rect x="7" y="3" width="1.2" height="1.2"/><rect x="3" y="5" width="1.2" height="1.2"/><rect x="5" y="5" width="1.2" height="1.2"/><rect x="7" y="5" width="1.2" height="1.2"/></g></svg>
<!-- taskbar -->
<div class="a" style="left:0;top:555px;width:1024px;height:4px;background:#1c1c1c"></div>
<div class="a" style="left:26px;top:555px;width:183px;height:4px;background:#e9e9e9"></div>
<div class="a" style="left:186px;top:556px;width:22px;height:3px;border-radius:50% 50% 0 0;background:#d8a8a8"></div>
<div class="a" style="left:418px;top:555px;width:26px;height:4px;background:#474747"></div>
<div class="a" style="left:972px;top:557.5px;width:4px;height:1.5px;background:#ddd"></div><div class="a" style="left:980px;top:557.5px;width:4px;height:1.5px;background:#ddd"></div>


</body></html>
